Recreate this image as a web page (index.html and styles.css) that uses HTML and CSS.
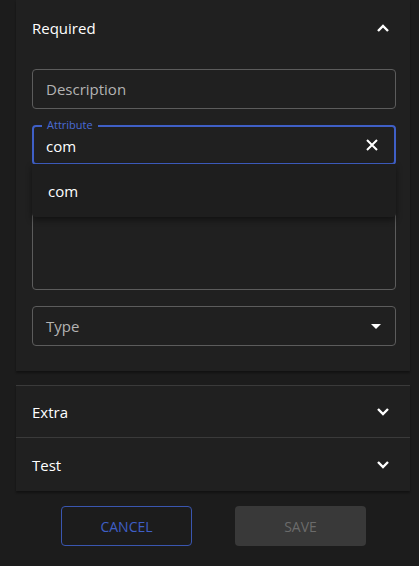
FILE: index.html
```html
<!DOCTYPE html>
<html>
<head>
<meta charset="utf-8">
<link rel="stylesheet" href="styles.css">
</head>
<body>
<div class="page">
  <section class="panel expanded">
    <div class="summary">
      <span class="title">Required</span>
      <svg class="chev" width="14" height="10" viewBox="0 0 14 10"><path d="M2 8 L7 3 L12 8" fill="none" stroke="#fff" stroke-width="2.4"/></svg>
    </div>
    <div class="details">
      <div class="field"><span class="placeholder">Description</span></div>
      <div class="field-wrap">
        <div class="field focused">
          <span class="label">Attribute</span>
          <span class="value">com</span>
          <svg class="clear" width="14" height="14" viewBox="0 0 14 14"><path d="M2 2 L12 12 M12 2 L2 12" fill="none" stroke="#fff" stroke-width="2"/></svg>
        </div>
        <div class="menu"><div class="option">com</div></div>
      </div>
      <div class="field multiline"></div>
      <div class="field select">
        <span class="placeholder">Type</span>
        <svg class="caret" width="12" height="7" viewBox="0 0 12 7"><path d="M1 1 L11 1 L6 6 Z" fill="#fff"/></svg>
      </div>
    </div>
  </section>
  <section class="panel collapsed extra">
    <div class="summary">
      <span class="title">Extra</span>
      <svg class="chev" width="14" height="10" viewBox="0 0 14 10"><path d="M2 2 L7 7 L12 2" fill="none" stroke="#fff" stroke-width="2.4"/></svg>
    </div>
  </section>
  <section class="panel collapsed test">
    <div class="summary">
      <span class="title">Test</span>
      <svg class="chev" width="14" height="10" viewBox="0 0 14 10"><path d="M2 2 L7 7 L12 2" fill="none" stroke="#fff" stroke-width="2.4"/></svg>
    </div>
  </section>
  <div class="actions">
    <button class="btn cancel">CANCEL</button>
    <button class="btn save">SAVE</button>
  </div>
</div>
</body>
</html>
```
FILE: styles.css
```css
* { box-sizing: border-box; }
html, body { margin: 0; padding: 0; background: #1c1c1c; }
body {
  font-family: "Open Sans", "Noto Sans", sans-serif;
  color: #fff;
  width: 419px;
  height: 566px;
  overflow: hidden;
}
.page { padding: 0 9px 0 16px; }
.panel {
  background: #202020;
  box-shadow: 0 2px 2px rgba(0,0,0,0.35);
}
.panel.expanded { height: 371px; margin-bottom: 14px; }
.panel.collapsed { border-top: 1px solid #3a3a3a; }
.summary {
  display: flex;
  align-items: center;
  justify-content: space-between;
  padding: 0 20px 0 16px;
  height: 56px;
}
.panel.extra .summary { height: 51px; }
.panel.test .summary { height: 53px; }
.title { font-size: 15px; }
.details {
  padding: 13px 14px 0 16px;
  display: flex;
  flex-direction: column;
  gap: 16px;
}
.field {
  position: relative;
  height: 40px;
  border: 1px solid #5c5c5c;
  border-radius: 4px;
  display: flex;
  align-items: center;
  padding: 0 14px 0 13px;
  font-size: 15px;
}
.placeholder { color: #b3b3b3; }
.field-wrap { position: relative; }
.field.focused {
  border: 2px solid #3f5fc6;
  padding-left: 12px;
  justify-content: space-between;
}
.label {
  position: absolute;
  left: 8px;
  top: -10px;
  font-size: 11px;
  color: #4a6bd6;
  background: #202020;
  padding: 0 5px;
  line-height: 16px;
}
.value { padding-top: 2px; }
.clear { margin-right: 1px; }
.menu {
  position: absolute;
  left: 0;
  right: 0;
  top: 39px;
  height: 53px;
  background: #1e1e1e;
  box-shadow: 0 3px 6px rgba(0,0,0,0.45);
  border-radius: 0 0 4px 4px;
  z-index: 2;
}
.option {
  padding: 0 16px;
  height: 53px;
  display: flex;
  align-items: center;
  font-size: 15px;
}
.field.multiline { height: 109px; }
.field.select { justify-content: space-between; padding-right: 13px; }
.actions {
  display: flex;
  justify-content: space-between;
  padding: 15px 44px 0 45px;
}
.btn {
  width: 131px;
  height: 40px;
  border-radius: 4px;
  font-family: "Open Sans", "Noto Sans", sans-serif;
  font-size: 14px;
  background: transparent;
}
.cancel { border: 1px solid #3a56b0; color: #3f5fc6; }
.save { border: none; background: #393939; color: #6b6b6b; }
```
